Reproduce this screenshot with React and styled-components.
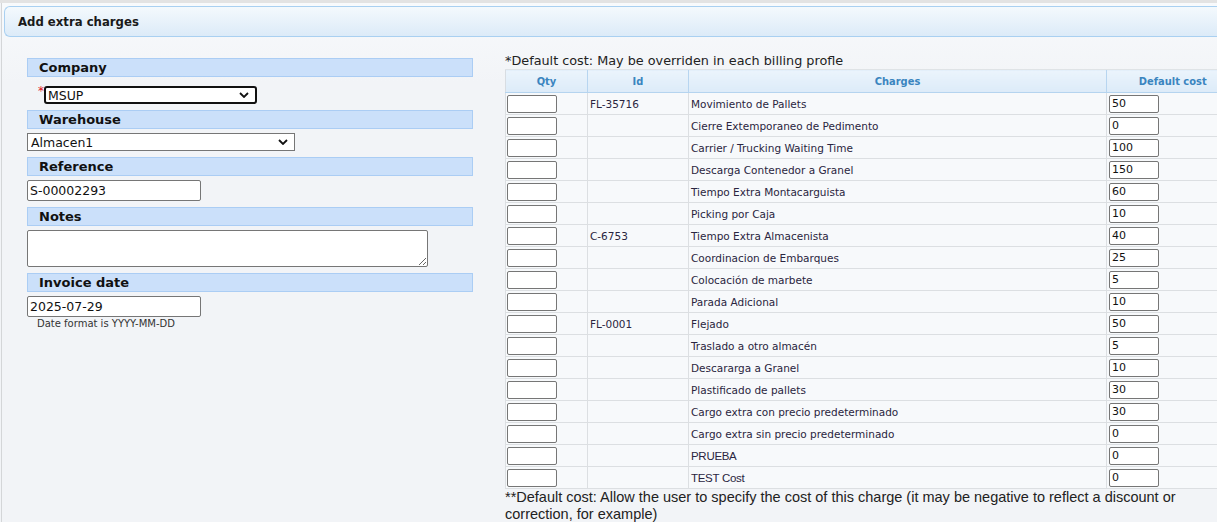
import React from "react";
import styled, { createGlobalStyle } from "styled-components";

const Global = createGlobalStyle`
  html, body { margin: 0; padding: 0; background: #f2f4f7; overflow: hidden; }
  body { font-family: "DejaVu Sans", sans-serif; color: #222; }
  * { box-sizing: border-box; }
`;

const Page = styled.div`
  border-top: 3px solid #e3e3e3;
  width: 1217px;
  height: 522px;
  overflow: hidden;
`;

const Panel = styled.div`
  margin-left: 1px;
  border-left: 1px solid #d4d6d8;
  padding: 3px 0 0 2px;
  height: 100%;
  background: linear-gradient(#f8fafc, #f2f4f7 80px);
`;

const TitleBar = styled.div`
  height: 31px;
  width: 1300px;
  border: 1px solid #a9d0f1;
  border-right: none;
  border-radius: 6px 0 0 6px;
  background: linear-gradient(#f4f9fd, #dcebf8);
  display: flex;
  align-items: center;
  padding-left: 13px;
  font-family: "DejaVu Sans Condensed", "DejaVu Sans", sans-serif;
  font-weight: bold;
  font-size: 13px;
  color: #1a1a1a;
`;

const Content = styled.div`
  display: flex;
  gap: 32px;
  padding-left: 23px;
`;

const LeftCol = styled.div`
  width: 446px;
  flex: none;
  padding-top: 21px;
  display: flex;
  flex-direction: column;
`;

const SectionHead = styled.div`
  height: 19px;
  background: #cbe0fa;
  border: 1px solid #abcdf4;
  padding-left: 11px;
  font-family: "DejaVu Sans", sans-serif;
  font-weight: bold;
  font-size: 13px;
  line-height: 17px;
  color: #111;
`;

const Field = styled.div`
  padding: ${(p) => p.$pad || "4px 0 6px"};
  display: flex;
  flex-direction: column;
  align-items: flex-start;
`;

const ReqRow = styled.div`
  display: flex;
  align-items: flex-start;
  padding-left: 11px;
`;

const Star = styled.span`
  color: #e0151b;
  font-size: 12px;
  line-height: 10px;
  width: 6px;
  font-family: "DejaVu Sans", sans-serif;
`;

const Select = styled.select`
  width: ${(p) => p.$w}px;
  height: 18px;
  padding: 0 0 0 ${(p) => (p.$focus ? 2 : 3)}px;
  font-family: "DejaVu Sans", sans-serif;
  font-size: 12.5px;
  color: #111;
  background: #fff;
  border: ${(p) => (p.$focus ? "2px solid #111" : "1px solid #767676")};
  border-radius: ${(p) => (p.$focus ? "3px" : "0")};
  outline: none;
  appearance: none;
  background-image: url("data:image/svg+xml;utf8,<svg xmlns='http://www.w3.org/2000/svg' width='10' height='6'><path d='M1 1l4 4 4-4' fill='none' stroke='%23111' stroke-width='1.8'/></svg>");
  background-repeat: no-repeat;
  background-position: right 6px center;
`;

const TextInput = styled.input`
  width: ${(p) => p.$w}px;
  height: 21px;
  padding: 0 2px;
  font-family: "DejaVu Sans", sans-serif;
  font-size: 12.5px;
  color: #111;
  background: #fff;
  border: 1px solid #767676;
  border-radius: 2px;
  outline: none;
`;

const Notes = styled.textarea`
  width: 401px;
  height: 37px;
  border: 1px solid #767676;
  border-radius: 2px;
  background: #fff;
  resize: both;
  display: block;
`;

const Help = styled.div`
  font-family: "DejaVu Sans", sans-serif;
  font-size: 10px;
  padding-left: 10px;
  margin-top: 1px;
  color: #333;
`;

const RightCol = styled.div`
  flex: none;
  width: 733px;
  padding-top: 15px;
`;

const Caption = styled.div`
  font-family: "DejaVu Sans", sans-serif;
  font-size: 12.8px;
  line-height: 17px;
  height: 17px;
  color: #222;
  white-space: nowrap;
`;

const Table = styled.table`
  border-collapse: collapse;
  table-layout: fixed;
  width: 733px;
`;

const Th = styled.th`
  height: 23px;
  padding: 0;
  font-family: "DejaVu Sans Condensed", "DejaVu Sans", sans-serif;
  font-size: 11px;
  font-weight: bold;
  color: #3a85bf;
  background: linear-gradient(#ebf4fc, #dcebf8);
  border-top: 1px solid #dfe3e6;
  border-bottom: 1px solid #b5d4ef;
  border-left: 1px solid #b7d5f0;
  &:first-child { border-left: 1px solid #d8dde2; }
  text-align: center;
`;

const Td = styled.td`
  height: 22px;
  padding: 0 0 0 ${(p) => p.$pl || 2}px;
  font-size: ${(p) => (p.$alt ? "11.5px" : "10.5px")};
  font-family: ${(p) => (p.$alt ? '"Liberation Sans", Arial, sans-serif' : '"DejaVu Sans", sans-serif')};
  ${(p) => p.$alt && "letter-spacing: -0.3px;"}
  color: #2a2540;
  background: #f7f9fb;
  border-bottom: 1px solid #dcdfe2;
  border-left: 1px solid #dcdfe2;
  white-space: nowrap;
  overflow: hidden;
`;

const CellInput = styled.input`
  display: block;
  width: 50px;
  height: 18px;
  padding: 0 2px;
  font-family: "DejaVu Sans", sans-serif;
  font-size: 11px;
  color: #111;
  background: #fff;
  border: 1px solid #767676;
  border-radius: 2px;
  outline: none;
`;

const Foot = styled.div`
  font-family: "Liberation Sans", Arial, sans-serif;
  font-size: 14.5px;
  line-height: 17px;
  color: #222;
  white-space: nowrap;
  padding-top: 0;
`;

const rows = [
  ["FL-35716", "Movimiento de Pallets", "50"],
  ["", "Cierre Extemporaneo de Pedimento", "0"],
  ["", "Carrier / Trucking Waiting Time", "100"],
  ["", "Descarga Contenedor a Granel", "150"],
  ["", "Tiempo Extra Montacarguista", "60"],
  ["", "Picking por Caja", "10"],
  ["C-6753", "Tiempo Extra Almacenista", "40"],
  ["", "Coordinacion de Embarques", "25"],
  ["", "Colocación de marbete", "5"],
  ["", "Parada Adicional", "10"],
  ["FL-0001", "Flejado", "50"],
  ["", "Traslado a otro almacén", "5"],
  ["", "Descararga a Granel", "10"],
  ["", "Plastificado de pallets", "30"],
  ["", "Cargo extra con precio predeterminado", "30"],
  ["", "Cargo extra sin precio predeterminado", "0"],
  ["", "PRUEBA", "0", true],
  ["", "TEST Cost", "0", true],
];

export default function App() {
  return (
    <>
      <Global />
      <Page>
        <Panel>
          <TitleBar>Add extra charges</TitleBar>
          <Content>
            <LeftCol>
              <SectionHead>Company</SectionHead>
              <Field $pad="9px 0 6px">
                <ReqRow>
                  <Star>*</Star>
                  <Select $w={213} $focus defaultValue="MSUP">
                    <option>MSUP</option>
                  </Select>
                </ReqRow>
              </Field>
              <SectionHead>Warehouse</SectionHead>
              <Field>
                <Select $w={268} defaultValue="Almacen1">
                  <option>Almacen1</option>
                </Select>
              </Field>
              <SectionHead>Reference</SectionHead>
              <Field>
                <TextInput $w={174} defaultValue="S-00002293" />
              </Field>
              <SectionHead>Notes</SectionHead>
              <Field>
                <Notes />
              </Field>
              <SectionHead>Invoice date</SectionHead>
              <Field $pad="4px 0 0">
                <TextInput $w={174} defaultValue="2025-07-29" />
                <Help>Date format is YYYY-MM-DD</Help>
              </Field>
            </LeftCol>
            <RightCol>
              <Caption>*Default cost: May be overriden in each billing profle</Caption>
              <Table>
                <colgroup>
                  <col style={{ width: 82 }} />
                  <col style={{ width: 101 }} />
                  <col style={{ width: 418 }} />
                  <col style={{ width: 132 }} />
                </colgroup>
                <thead>
                  <tr>
                    <Th>Qty</Th>
                    <Th>Id</Th>
                    <Th>Charges</Th>
                    <Th>Default cost</Th>
                  </tr>
                </thead>
                <tbody>
                  {rows.map(([id, name, cost, alt], i) => (
                    <tr key={i}>
                      <Td $pl={1}>
                        <CellInput />
                      </Td>
                      <Td>{id}</Td>
                      <Td $alt={alt}>{name}</Td>
                      <Td $pl={2}>
                        <CellInput defaultValue={cost} />
                      </Td>
                    </tr>
                  ))}
                </tbody>
              </Table>
              <Foot>
                **Default cost: Allow the user to specify the cost of this charge (it may be negative to reflect a discount or
                <br />
                correction, for example)
              </Foot>
            </RightCol>
          </Content>
        </Panel>
      </Page>
    </>
  );
}
